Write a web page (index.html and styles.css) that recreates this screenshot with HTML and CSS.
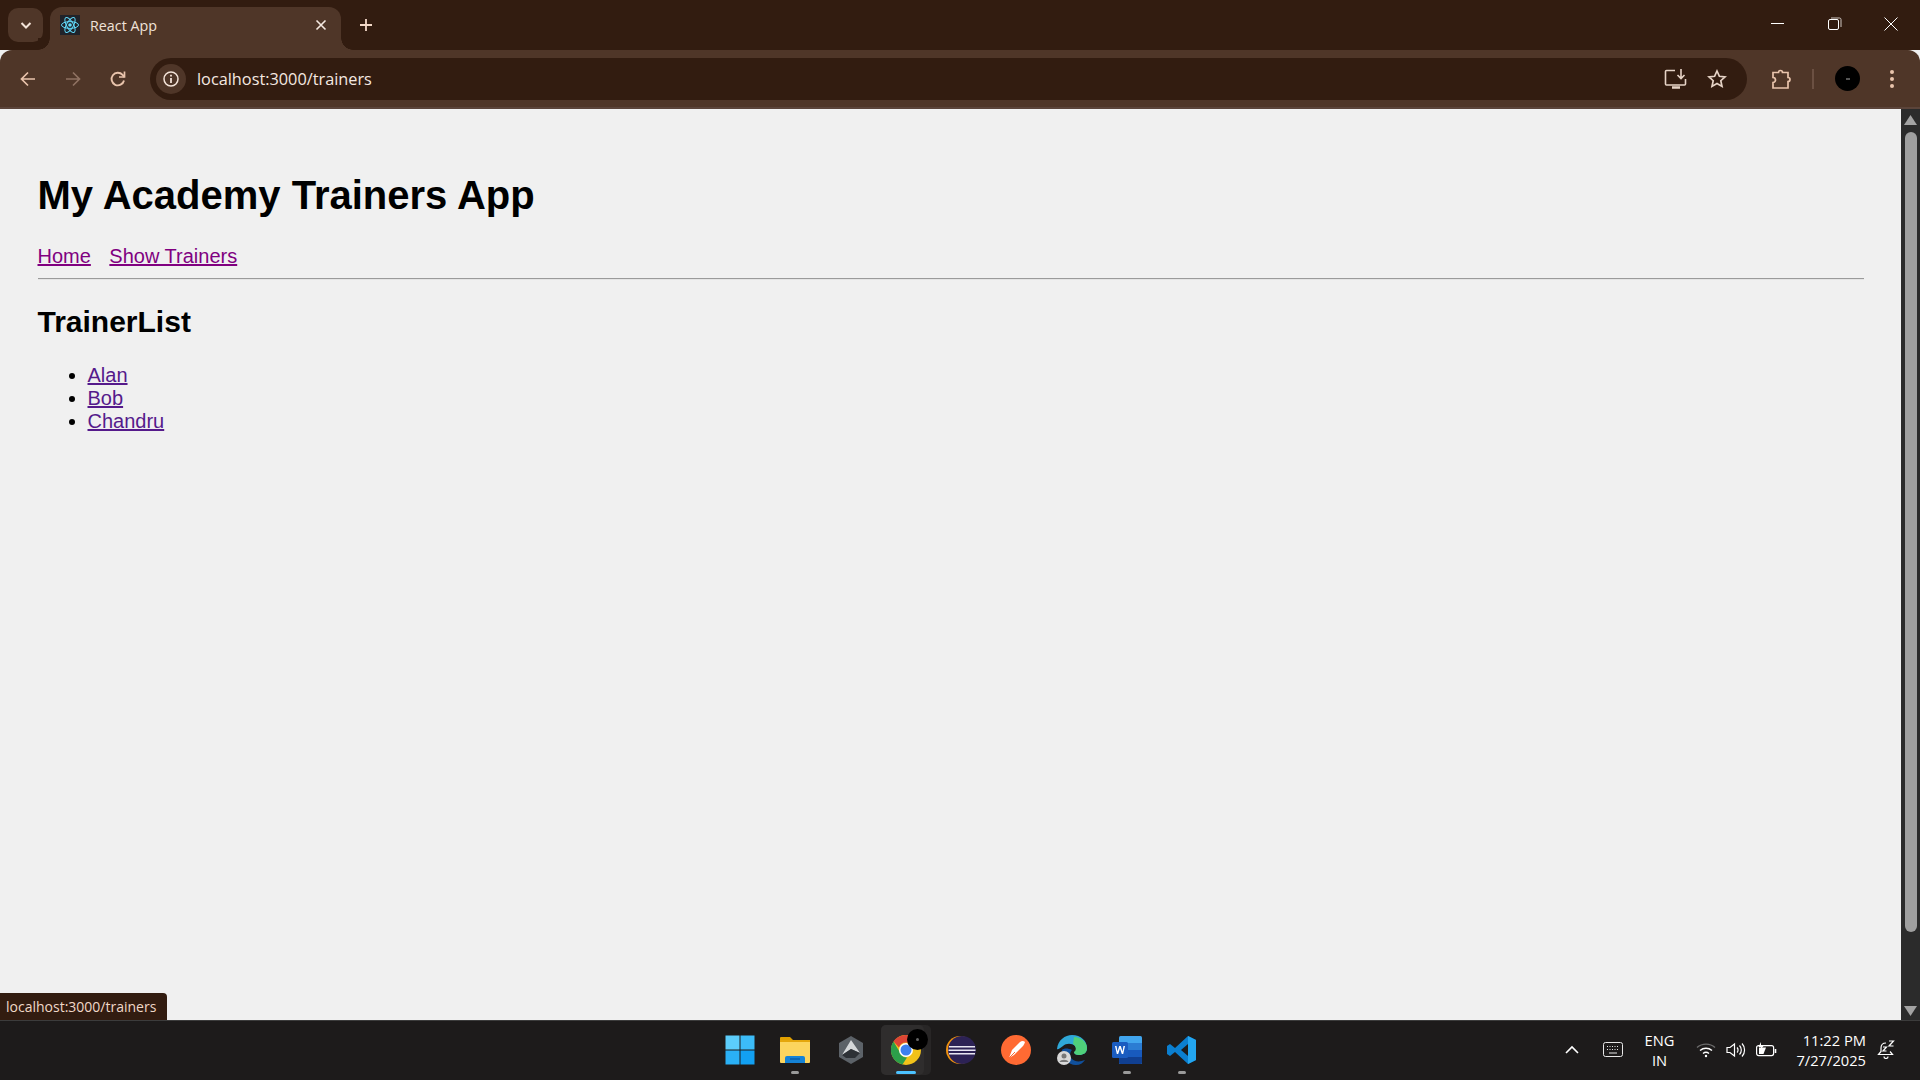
FILE: index.html
```html
<!DOCTYPE html>
<html lang="en">
<head>
    <meta charset="UTF-8">
    <meta name="viewport" content="width=device-width, initial-scale=1.0">
    <title>React App</title>
    <link rel="stylesheet" href="styles.css">
</head>
<body>
    <div class="tabstrip">
        <div class="tab-search">
            <svg width="16" height="16" viewBox="0 0 16 16"><path d="M3.500 6l4.500 4.500L12.500 6" fill="none" stroke="#f3e3d8" stroke-width="2"/></svg>
        </div>
        <div class="tab">
            <div class="favicon">
                <svg width="20" height="20" viewBox="0 0 20 20" fill="none" stroke="#61dafb" stroke-width="1">
                    <circle cx="10" cy="10" r="1.800" fill="#61dafb" stroke="none"/>
                    <ellipse cx="10" cy="10" rx="8.500" ry="3.400"/>
                    <ellipse cx="10" cy="10" rx="8.500" ry="3.400" transform="rotate(60 10 10)"/>
                    <ellipse cx="10" cy="10" rx="8.500" ry="3.400" transform="rotate(120 10 10)"/>
                </svg>
            </div>
            <span class="tab-title">React App</span>
            <svg class="tab-close" width="12" height="12" viewBox="0 0 12 12"><path d="M1.500 1.500l9 9M10.500 1.500l-9 9" stroke="#f5e9e1" stroke-width="1.600"/></svg>
        </div>
        <svg class="new-tab" width="14" height="14" viewBox="0 0 14 14"><path d="M7 1v12M1 7h12" stroke="#f3d9c8" stroke-width="1.800"/></svg>
        <div class="window-btns">
            <svg width="14" height="14" viewBox="0 0 14 14"><path d="M0 6.500h13" stroke="#fff" stroke-width="1"/></svg>
            <svg width="14" height="14" viewBox="0 0 14 14" fill="none" stroke="#fff"><rect x="0.500" y="2.500" width="10" height="10" rx="1.500"/><path d="M3 1h8.500a1.500 1.500 0 0 1 1.500 1.500V10" stroke="#cfc7c2"/></svg>
            <svg width="14" height="14" viewBox="0 0 14 14"><path d="M.5.500l13 13M13.500.500l-13 13" stroke="#fff" stroke-width="1"/></svg>
        </div>
    </div>

    <div class="toolbar">
        <svg class="nav-icon" width="20" height="20" viewBox="0 0 20 20" fill="none" stroke="#e9c4ac" stroke-width="1.700"><path d="M17 10H3.500M10 3.500L3.500 10l6.500 6.500"/></svg>
        <svg class="nav-icon" width="20" height="20" viewBox="0 0 20 20" fill="none" stroke="#8f7262" stroke-width="1.700"><path d="M3 10h13.500M10 3.500l6.500 6.500-6.500 6.500"/></svg>
        <svg class="nav-icon" width="20" height="20" viewBox="0 0 20 20" fill="none" stroke="#e9c4ac" stroke-width="1.900"><path d="M16 11.500a6.300 6.300 0 1 1-1.400-5.600L16.500 8"/><path d="M16.500 2.500V8H11" stroke-width="1.700"/></svg>
        <div class="omnibox">
            <div class="site-info">
                <svg width="18" height="18" viewBox="0 0 18 18" fill="none" stroke="#f3e3d8" stroke-width="1.500"><circle cx="9" cy="9" r="7"/><path d="M9 8v5" stroke-width="1.800"/><path d="M9 4.800v1.800" stroke-width="1.800"/></svg>
            </div>
            <span class="url">localhost:3000/trainers</span>
            <svg class="omni-icon omni-install" width="24" height="22" viewBox="0 0 24 22" fill="none" stroke="#e6d3c6" stroke-width="1.600"><path d="M11 2.500H2.500a1 1 0 0 0-1 1V16a1 1 0 0 0 1 1h18a1 1 0 0 0 1-1v-5"/><path d="M8 19.500h8" stroke-width="2.500"/><path d="M17 1v9M13.500 7l3.500 3.500L20.500 7"/></svg>
            <svg class="omni-icon" width="20" height="20" viewBox="0 0 20 20" fill="none" stroke="#e6d3c6" stroke-width="1.700"><path d="M10 2l2.400 5.300 5.600.6-4.200 3.800 1.200 5.700-5-2.900-5 2.900 1.200-5.700L2 7.900l5.600-.6z"/></svg>
        </div>
        <svg class="ext-icon" width="22" height="22" viewBox="0 0 22 22" fill="none" stroke="#e9c4ac" stroke-width="1.700"><path d="M2 4.500h5.500a2 2 0 0 1 4 0H17v5a2 2 0 0 1 0 4v6.500H2v-5.500a2.500 2.500 0 0 0 0-5z"/></svg>
        <div class="toolbar-sep"></div>
        <div class="avatar"><span class="avatar-dot"></span></div>
        <svg class="menu-icon" width="4" height="18" viewBox="0 0 4 18" fill="#e9c4ac"><circle cx="2" cy="2" r="2"/><circle cx="2" cy="9" r="2"/><circle cx="2" cy="16" r="2"/></svg>
    </div>

    <div class="viewport">
        <div class="page">
            <h1>My Academy Trainers App</h1>
            <nav class="main-nav">
                <a href="#">Home</a>
                <a href="#">Show Trainers</a>
            </nav>
            <hr>
            <h2>TrainerList</h2>
            <ul>
                <li><a class="trainer" href="#">Alan</a></li>
                <li><a class="trainer" href="#">Bob</a></li>
                <li><a class="trainer" href="#">Chandru</a></li>
            </ul>
        </div>
        <div class="scrollbar">
            <svg width="19" height="22" viewBox="0 0 19 22"><path d="M9.500 6l6.500 10H3z" fill="#a3a3a3"/></svg>
            <div class="scroll-track"><div class="scroll-thumb"></div></div>
            <svg width="19" height="22" viewBox="0 0 19 22"><path d="M9.500 18L3 8h13z" fill="#a3a3a3"/></svg>
        </div>
        <div class="status-bubble">localhost:3000/trainers</div>
    </div>

    <div class="taskbar">
        <div class="task-apps">
            <div class="task-app">
                <svg width="30" height="30" viewBox="0 0 30 30">
                    <rect x="0.500" y="0.500" width="14" height="14" fill="#5ccdfb"/>
                    <rect x="15.500" y="0.500" width="14" height="14" fill="#3cbcf8"/>
                    <rect x="0.500" y="15.500" width="14" height="14" fill="#2ab0f5"/>
                    <rect x="15.500" y="15.500" width="14" height="14" fill="#12a0f2"/>
                </svg>
            </div>
            <div class="task-app running">
                <svg width="32" height="28" viewBox="0 0 32 28">
                    <path d="M1 2a1 1 0 0 1 1-1h9l3 3h-13z" fill="#e0a000"/>
                    <path d="M1 4h30v22a1 1 0 0 1-1 1H2a1 1 0 0 1-1-1z" fill="#fcd55e"/>
                    <path d="M1 4h30v2H1z" fill="#e5a70c"/>
                    <path d="M6 22a2 2 0 0 1 2-2h16a2 2 0 0 1 2 2v5H6z" fill="#1583d6"/>
                    <path d="M11 23h10" stroke="#0a5ea8" stroke-width="1.500"/>
                </svg>
            </div>
            <div class="task-app">
                <svg width="28" height="30" viewBox="0 0 28 30">
                    <path d="M14 1l12 7v14l-12 7-12-7V8z" fill="#5c6268"/>
                    <path d="M14 5l9 13-9-4-9 6z" fill="#d5d8da"/>
                    <path d="M14 14l9 4-5 5H9l-4-3z" fill="#2d3136"/>
                </svg>
            </div>
            <div class="task-app active">
                <svg width="30" height="30" viewBox="0 0 30 30">
                    <circle cx="15" cy="15" r="15" fill="#f2c21a"/>
                    <path d="M15 0a15 15 0 0 1 13 7.500H15a7.500 7.500 0 0 0-7 5L2.500 6.500A15 15 0 0 1 15 0z" fill="#dd4535"/>
                    <path d="M2.500 6.500L9 17.500a7.500 7.500 0 0 0 7 5L11.500 29.600A15 15 0 0 1 2.500 6.500z" fill="#2c9e4a"/>
                    <circle cx="15" cy="15" r="7" fill="#fff"/>
                    <circle cx="15" cy="15" r="5.500" fill="#3d80ee"/>
                </svg>
                <span class="chrome-badge"><span class="chrome-badge-dot"></span></span>
            </div>
            <div class="task-app">
                <svg width="30" height="30" viewBox="0 0 30 30">
                    <circle cx="14" cy="15" r="14" fill="#f0920e"/>
                    <circle cx="16" cy="15" r="14" fill="#2c2255"/>
                    <path d="M3 11h26v1.500H3zM2.500 14.500h27V16h-27zM3 18h26v1.500H3z" fill="#e8e6f2"/>
                </svg>
            </div>
            <div class="task-app">
                <svg width="30" height="30" viewBox="0 0 30 30">
                    <circle cx="15" cy="15" r="15" fill="#ff6a33"/>
                    <path d="M8 23l3-8 8-8c2-1.500 4-1 5 0-1 3-2 4-3 5l-8 8z" fill="#fff"/>
                    <path d="M8 23l6-6" stroke="#ff6a33" stroke-width="1"/>
                </svg>
            </div>
            <div class="task-app">
                <svg width="32" height="32" viewBox="0 0 32 32">
                    <path d="M1 15C2 6 9 1 16 1c9 0 15 6 15 13 0 5-4 7-8 7-3 0-5-1-5-3 3 0 3-3 1-6-3-3-9-3-12 0-3 2-5 4-6 3z" fill="#2fa8d8"/>
                    <path d="M18 3c7 0 13 5 13 11 0 5-4 7-8 7-3 0-5-1-5-3 3-2 2-6-1-8z" fill="#4fd07a"/>
                    <path d="M6 16c0 8 6 15 14 15 4 0 7-2 9-5-5 2-10 2-13-1-3-3-2-7 0-9-4-2-8-2-10 0z" fill="#10509c"/>
                    <circle cx="8" cy="24" r="7" fill="#d8d8d8"/>
                    <circle cx="8" cy="22" r="2.500" fill="#777"/>
                    <path d="M3.500 28c1-3 8-3 9 0z" fill="#777"/>
                </svg>
            </div>
            <div class="task-app running">
                <svg width="30" height="30" viewBox="0 0 30 30">
                    <rect x="7" y="1" width="23" height="28" rx="1.500" fill="#41a5ee"/>
                    <rect x="7" y="8" width="23" height="7" fill="#2b7cd3"/>
                    <rect x="7" y="15" width="23" height="7" fill="#185abd"/>
                    <path d="M7 22h23v5.500a1.500 1.500 0 0 1-1.500 1.500H8.500A1.500 1.500 0 0 1 7 27.500z" fill="#103f91"/>
                    <rect x="0" y="7" width="16" height="16" rx="1.500" fill="#1a5cc0"/>
                    <path d="M3 11l1.800 8h1.400L8 13.500 9.800 19h1.400L13 11h-1.500l-1 5.500L8.800 11H7.200l-1.700 5.500-1-5.500z" fill="#fff"/>
                </svg>
            </div>
            <div class="task-app running">
                <svg width="30" height="30" viewBox="0 0 30 30">
                    <path d="M21 1l8 4v20l-8 4L8 17l-5 4-3-2v-8l3-2 5 4z" fill="#0b7fd0"/>
                    <path d="M21 1l8 4v20l-8 4z" fill="#23a6f0"/>
                    <path d="M21 9l-7 6 7 6z" fill="#1c1b1b"/>
                </svg>
            </div>
        </div>
        <div class="tray">
            <svg class="tray-chevron" width="16" height="10" viewBox="0 0 16 10" fill="none" stroke="#fff" stroke-width="1.600"><path d="M2 8l6-6 6 6"/></svg>
            <svg class="tray-keyboard" width="20" height="15" viewBox="0 0 20 15" fill="none" stroke="#e8e8e8" stroke-width="1"><rect x="0.500" y="0.500" width="19" height="14" rx="2"/><path d="M4 4.500h12M4 7.500h12" stroke-dasharray="1 1.500"/><path d="M6 11h8"/></svg>
            <div class="tray-lang"><span>ENG</span><span>IN</span></div>
            <svg class="tray-wifi" width="20" height="16" viewBox="0 0 20 16" fill="none" stroke-width="1.400"><path d="M1 5.500c5-4.500 13-4.500 18 0" stroke="#6c6c6c"/><path d="M4 8.500c3.500-3 8.500-3 12 0M7 11.500c1.700-1.400 4.300-1.400 6 0" stroke="#fff"/><circle cx="10" cy="14" r="1.200" fill="#fff" stroke="none"/></svg>
            <svg class="tray-volume" width="20" height="16" viewBox="0 0 20 16" fill="none" stroke="#fff" stroke-width="1.200"><path d="M1 5.500h3L8.500 2v12L4 10.500H1z"/><path d="M11 5.500a3.500 3.500 0 0 1 0 5M13.500 3.500a6.500 6.500 0 0 1 0 9M16 1.500a9.500 9.500 0 0 1 0 13"/></svg>
            <svg class="tray-battery" width="21" height="16" viewBox="0 0 21 16" fill="none" stroke="#fff" stroke-width="1.200"><rect x="0.600" y="3.600" width="17" height="10" rx="2"/><path d="M19.500 7v4" stroke-width="1.600"/><path d="M3 12V5.500h7L7.500 12z" fill="#fff" stroke="none"/><path d="M5 0L2.500 5H5l-1 3.500L7.500 4H5z" fill="#fff" stroke="none"/></svg>
            <div class="tray-clock"><span>11:22 PM</span><span>7/27/2025</span></div>
            <svg class="tray-bell" width="18" height="19" viewBox="0 0 18 19" fill="none" stroke="#fff" stroke-width="1.200"><path d="M9 3C5.500 3 4 5.500 4 8v3.500L1.500 14.500h14L13 11.500"/><path d="M7 16.500a2 2 0 0 0 4 0"/><path d="M6 7h3.500L6 11h3.500M12 1h4.500L12 6h4.500"/></svg>
        </div>
    </div>
</body>
</html>
```

FILE: styles.css
```css
html, body {
    height: 100%;
}

body {
    margin: 0;
    width: 1920px;
    height: 1080px;
    overflow: hidden;
    display: flex;
    flex-direction: column;
    background-color: #f0f0f0;
    font-family: "Liberation Sans", Arial, sans-serif;
}

/* browser chrome */
.tabstrip {
    height: 50px;
    flex: none;
    display: flex;
    align-items: flex-start;
    background-color: #321c10;
    padding-left: 8px;
}

.tab-search {
    width: 35px;
    height: 34px;
    margin-top: 8px;
    border-radius: 10px;
    background-color: #4f3628;
    display: flex;
    align-items: center;
    justify-content: center;
}

.tab {
    width: 291px;
    height: 43px;
    margin: 7px 0 0 7px;
    padding: 0 14px 7px 10px;
    box-sizing: border-box;
    border-radius: 12px 12px 0 0;
    background-color: #4f3628;
    display: flex;
    align-items: center;
    position: relative;
}

/* the curved feet of the active tab */
.tab::before,
.tab::after {
    content: "";
    position: absolute;
    bottom: 0;
    width: 12px;
    height: 12px;
}

.tab::before {
    left: -12px;
    background: radial-gradient(circle at 0 0, #321c10 11.500px, #4f3628 12px);
}

.tab::after {
    right: -12px;
    background: radial-gradient(circle at 100% 0, #321c10 11.500px, #4f3628 12px);
}

.favicon {
    width: 20px;
    height: 20px;
    background-color: #20232a;
}

.tab-title {
    margin-left: 10px;
    flex: 1;
    font-family: "Open Sans", sans-serif;
    font-size: 14.300px;
    color: #f0e2d8;
}

.new-tab {
    margin: 18px 0 0 18px;
}

.window-btns {
    margin-left: auto;
    width: 127px;
    margin-right: 22px;
    margin-top: 17px;
    display: flex;
    justify-content: space-between;
}

.toolbar {
    height: 59px;
    flex: none;
    box-sizing: border-box;
    border-bottom: 2px solid #5b443a;
    border-radius: 12px 12px 0 0;
    background-color: #4f3628;
    display: flex;
    align-items: center;
}

.nav-icon {
    margin-left: 18px;
}

.nav-icon + .nav-icon {
    margin-left: 25px;
}

.omnibox {
    width: 1597px;
    height: 42px;
    margin: 1px 0 0 22px;
    border-radius: 21px;
    background-color: #321c10;
    display: flex;
    align-items: center;
    padding-left: 6px;
    box-sizing: border-box;
}

.site-info {
    width: 30px;
    height: 30px;
    border-radius: 50%;
    background-color: #4f3628;
    display: flex;
    align-items: center;
    justify-content: center;
}

.url {
    margin-left: 11px;
    flex: 1;
    font-family: "Open Sans", sans-serif;
    font-size: 16.300px;
    color: #f5e9e1;
}

.omni-icon {
    margin-right: 20px;
}

.omni-install {
    margin-right: 19px;
}

.ext-icon {
    margin-left: 24px;
}

.toolbar-sep {
    width: 2px;
    height: 20px;
    margin-left: 19px;
    background-color: #6b5042;
}

.avatar {
    width: 25px;
    height: 25px;
    margin-left: 21px;
    border-radius: 50%;
    background-color: #000;
    display: flex;
    align-items: center;
    justify-content: center;
}

.avatar-dot {
    width: 4px;
    height: 2px;
    background-color: #555;
}

.menu-icon {
    margin-left: 30px;
}

/* page area */
.viewport {
    flex: 1;
    display: flex;
    position: relative;
    min-height: 0;
}

.page {
    flex: 1;
    padding: 36px 37px 0 37.500px;
    color: #000;
}

h1 {
    font-size: 40px;
    margin: 27px 0 27px 0;
    line-height: 46px;
}

.main-nav {
    font-size: 20px;
    line-height: 23px;
    display: flex;
    gap: 18.500px;
}

.main-nav a {
    color: #800080;
}

hr {
    margin: 10px 0 0 0;
    border: none;
    border-top: 1px solid #9a9a9a;
    border-bottom: 1px solid #e4e4e4;
}

h2 {
    font-size: 30px;
    line-height: 34px;
    margin: 25px 0 25px 0;
}

ul {
    margin: 0;
    padding-left: 50px;
    font-size: 20px;
    line-height: 23px;
}

.trainer {
    color: #551a8b;
}

.scrollbar {
    width: 19px;
    flex: none;
    background-color: #2b2b2b;
    display: flex;
    flex-direction: column;
}

.scroll-track {
    flex: 1;
    padding: 1px 3px 0 4px;
}

.scroll-thumb {
    height: 800px;
    border-radius: 6px;
    background-color: #9f9f9f;
}

.status-bubble {
    position: absolute;
    left: 0;
    bottom: 0;
    height: 27px;
    line-height: 27px;
    padding: 0 11px 0 6px;
    border-radius: 0 4px 0 0;
    background-color: #321c10;
    color: #f0d8c8;
    font-family: "Open Sans", sans-serif;
    font-size: 14px;
}

/* windows taskbar */
.taskbar {
    height: 60px;
    flex: none;
    box-sizing: border-box;
    padding-bottom: 2px;
    border-top: 1px solid #3c3c3c;
    background-color: #1d1b1b;
    display: flex;
    align-items: center;
    position: relative;
    color: #fff;
    font-family: "Open Sans", sans-serif;
    font-size: 14.700px;
}

.task-apps {
    margin-left: 715px;
    display: flex;
    gap: 5.300px;
}

.task-app {
    width: 50px;
    height: 50px;
    position: relative;
    display: flex;
    align-items: center;
    justify-content: center;
    border-radius: 5px;
}

.task-app svg {
    position: relative;
}

.task-app.active {
    background-color: #282626;
}

/* front tile of the stacked chrome windows */
.task-app.active::before {
    content: "";
    position: absolute;
    left: 0;
    top: 0;
    width: 43px;
    height: 100%;
    border-radius: 5px;
    background-color: #2f2d2d;
}

.task-app.running::after,
.task-app.active::after {
    content: "";
    position: absolute;
    bottom: 1px;
    left: 21px;
    width: 8px;
    height: 3px;
    border-radius: 2px;
    background-color: #9a9a9a;
}

.task-app.active::after {
    left: 15px;
    width: 20px;
    background-color: #4cc2ff;
}

.chrome-badge {
    position: absolute;
    top: 4px;
    right: 3px;
    width: 21px;
    height: 21px;
    border-radius: 50%;
    background-color: #000;
    display: flex;
    align-items: center;
    justify-content: center;
}

.chrome-badge-dot {
    width: 3px;
    height: 3px;
    border-radius: 50%;
    background-color: #666;
}

.tray {
    margin-left: auto;
    display: flex;
    align-items: center;
    padding-right: 25px;
}

.tray-keyboard {
    margin-left: 23px;
}

.tray-lang,
.tray-clock {
    display: flex;
    flex-direction: column;
    line-height: 20px;
}

.tray-lang {
    align-items: center;
    margin-left: 22px;
}

.tray-wifi {
    margin-left: 22px;
}

.tray-volume {
    margin-left: 10px;
}

.tray-battery {
    margin-left: 10px;
}

.tray-clock {
    align-items: flex-end;
    margin-left: 19px;
}

.tray-bell {
    margin-left: 11px;
}
```
